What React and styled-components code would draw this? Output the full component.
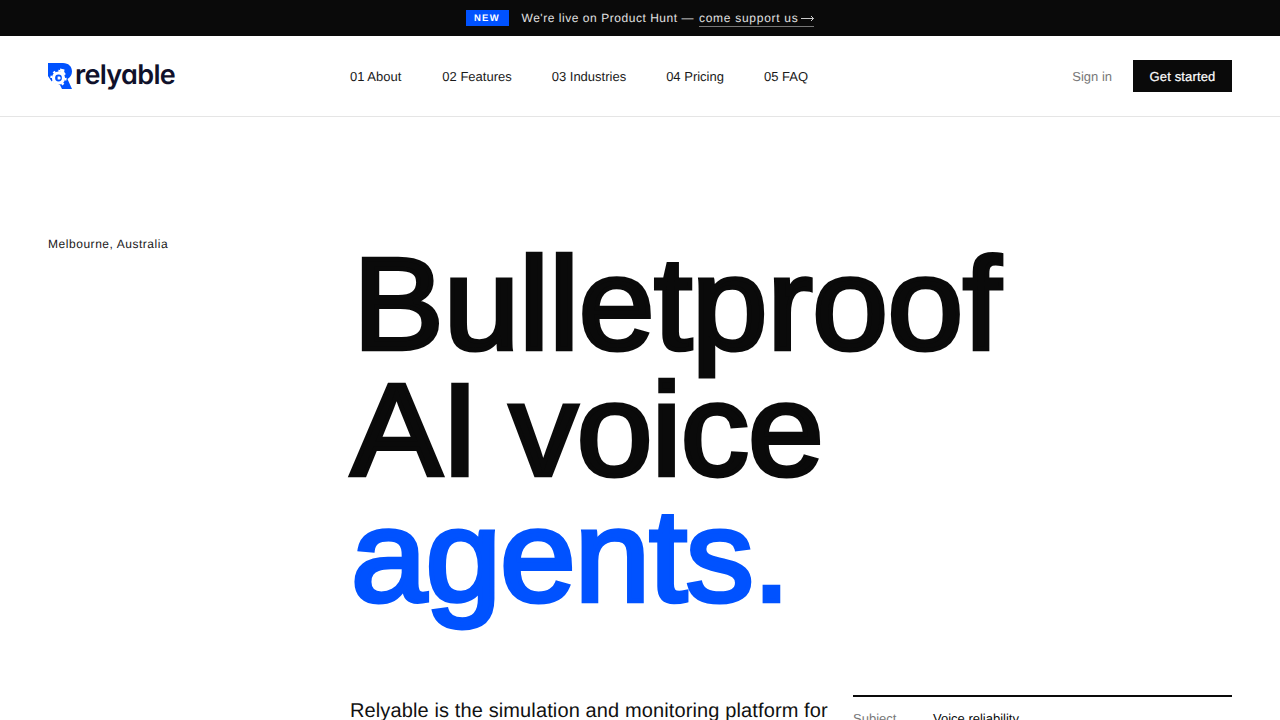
import React from "react";
import styled, { createGlobalStyle } from "styled-components";

const Global = createGlobalStyle`
  html, body { margin: 0; padding: 0; background: #fff; }
  body {
    font-family: "Liberation Sans", Arial, sans-serif;
    color: #0a0a0a;
    overflow-x: hidden;
    text-rendering: geometricPrecision;
  }
  a { color: inherit; text-decoration: none; }
`;

const Announce = styled.div`
  height: 36px;
  background: #0a0a0a;
  color: #e0e0e0;
  display: flex;
  align-items: center;
  justify-content: center;
  gap: 13px;
  font-size: 12px;
  letter-spacing: 0.045em;
`;

const Badge = styled.span`
  width: 43px;
  height: 16px;
  background: #0052ff;
  color: #fff;
  font-size: 9.5px;
  font-weight: 700;
  letter-spacing: 0.14em;
  display: flex;
  align-items: center;
  justify-content: center;
`;

const AnnounceText = styled.span`
  padding-top: 2px;
`;

const SupportLink = styled.a`
  display: inline-flex;
  align-items: center;
  gap: 3px;
  border-bottom: 1px solid #777;
  padding-bottom: 1px;
  margin-left: 1px;
  letter-spacing: 0.06em;
`;

const Header = styled.header`
  height: 80px;
  border-bottom: 1px solid #e5e5e5;
  padding: 0 48px;
  display: flex;
  align-items: center;
`;

const Logo = styled.a`
  width: 302px;
  display: flex;
  align-items: center;
  gap: 3px;
  color: #10112b;
  font-family: Inter, "Liberation Sans", sans-serif;
  font-feature-settings: "cv11";
  font-size: 27px;
  font-weight: 600;
  letter-spacing: -0.025em;
`;

const LogoText = styled.span`
  margin-top: -3px;
`;

const Nav = styled.nav`
  display: flex;
  gap: 40px;
  font-size: 13px;
`;

const NavLink = styled.a`
  color: #1a1a1a;
  &:first-child {
    margin-right: 1px;
  }
`;

const Actions = styled.div`
  margin-left: auto;
  display: flex;
  align-items: center;
  gap: 21px;
  font-size: 13px;
`;

const SignIn = styled.a`
  color: #777;
`;

const Cta = styled.a`
  width: 99px;
  height: 32px;
  background: #0a0a0a;
  color: #fff;
  letter-spacing: 0.012em;
  -webkit-text-stroke: 0.2px currentColor;
  display: flex;
  align-items: center;
  justify-content: center;
`;

const Hero = styled.main`
  padding: 120px 48px 0;
  display: grid;
  grid-template-columns: 302px 1fr;
`;

const Location = styled.div`
  font-size: 12px;
  letter-spacing: 0.045em;
  line-height: 14px;
  color: #1a1a1a;
`;

/* Liberation has no medium cut and runs narrow, so the regular is thickened and widened */
const Title = styled.h1`
  margin: 4px 0 0;
  padding-left: 1px;
  font-size: 131px;
  font-weight: 400;
  line-height: 126px;
  -webkit-text-stroke: 4.5px currentColor;
  color: #0a0a0a;
  transform: scaleX(1.04);
  transform-origin: left top;
`;

const Line = styled.span`
  display: block;
  padding-left: ${(props) => props.$indent || 0}px;
  letter-spacing: ${(props) => props.$track}px;
  word-spacing: ${(props) => props.$words || 0}px;
  color: ${(props) => props.$color || "inherit"};
`;

const Columns = styled.div`
  margin-top: 76px;
  display: grid;
  grid-template-columns: 478px 379px;
  gap: 25px;
`;

const Lead = styled.p`
  margin: 0;
  font-size: 20px;
  line-height: 32px;
  letter-spacing: 0.006em;
  color: #111;
`;

const Facts = styled.dl`
  margin: 0;
  border-top: 2px solid #0a0a0a;
  padding-top: 14px;
  display: grid;
  grid-template-columns: 80px 1fr;
  font-size: 13px;
`;

const FactKey = styled.dt`
  color: #777;
`;

const FactValue = styled.dd`
  margin: 0;
  color: #0a0a0a;
`;

const LogoMark = () => (
  <svg width="24" height="26" viewBox="0 0 24 26" aria-hidden="true">
    <path fill="#0052ff" d="M0 0H15C20.5 0 24 3.5 24 8.5C24 12 22 14.5 19.5 16L24 26H14L12 22L4 19L0 13Z" />
    <path fill="#fff" d="M12 5.5L16.5 6.5L16 10.5L12.5 10Z" />
    <circle cx="10.5" cy="15" r="6.6" fill="#fff" />
    <circle cx="10.5" cy="15" r="7.2" fill="none" stroke="#fff" strokeWidth="2" strokeDasharray="2.4 3.2" />
    <circle cx="10.5" cy="15" r="3.4" fill="#0052ff" />
    <path fill="#fff" d="M9.6 13.4H11C12 13.4 12.6 14.1 12.6 15S12 16.6 11 16.6H9.6Z" />
  </svg>
);

const Arrow = () => (
  <svg width="13" height="8" viewBox="0 0 13 8" fill="none" stroke="#e0e0e0" strokeWidth="0.9" aria-hidden="true">
    <path d="M0 4.5H12.5M10 2L12.5 4.5L10 7" />
  </svg>
);

const navItems = ["01 About", "02 Features", "03 Industries", "04 Pricing", "05 FAQ"];

const App = () => (
  <>
    <Global />
    <Announce>
      <Badge>NEW</Badge>
      <AnnounceText>
        We're live on Product Hunt —{" "}
        <SupportLink href="#">
          come support us
          <Arrow />
        </SupportLink>
      </AnnounceText>
    </Announce>
    <Header>
      <Logo href="#">
        <LogoMark />
        <LogoText>relyable</LogoText>
      </Logo>
      <Nav>
        {navItems.map((item) => (
          <NavLink key={item} href="#">
            {item}
          </NavLink>
        ))}
      </Nav>
      <Actions>
        <SignIn href="#">Sign in</SignIn>
        <Cta href="#">Get started</Cta>
      </Actions>
    </Header>
    <Hero>
      <Location>Melbourne, Australia</Location>
      <div>
        <Title>
          <Line $indent={2} $track={-0.35}>Bulletproof</Line>
          <Line $track={-0.92} $words={-5}>AI voice</Line>
          <Line $track={-1.2} $color="#0052ff">agents.</Line>
        </Title>
        <Columns>
          <Lead>Relyable is the simulation and monitoring platform for</Lead>
          <Facts>
            <FactKey>Subject</FactKey>
            <FactValue>Voice reliability</FactValue>
          </Facts>
        </Columns>
      </div>
    </Hero>
  </>
);

export default App;
